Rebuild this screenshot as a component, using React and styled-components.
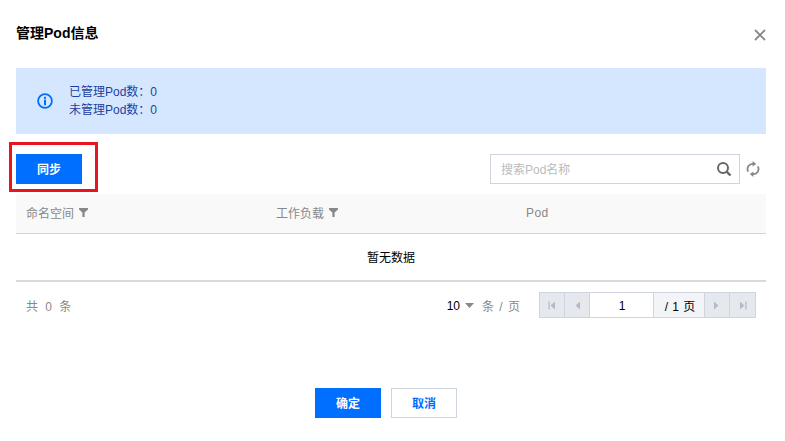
import React from 'react';
import styled, { createGlobalStyle } from 'styled-components';

const Global = createGlobalStyle`
  html, body { margin: 0; padding: 0; background: #fff; }
  body {
    font-family: "Liberation Sans", "Noto Sans CJK SC", sans-serif;
    font-size: 12px;
    color: #000;
  }
  * { box-sizing: border-box; }
`;

const Dialog = styled.div`
  position: relative;
  width: 785px;
  height: 441px;
  padding: 0 19px 0 16px;
  overflow: hidden;
`;

const Header = styled.div`
  display: flex;
  justify-content: space-between;
  align-items: flex-start;
  height: 68px;
  padding-top: 24px;
`;

const Title = styled.h3`
  margin: 0;
  font-size: 14px;
  line-height: 18px;
  font-weight: 700;
`;

const CloseButton = styled.button`
  border: 0;
  background: none;
  padding: 0;
  margin: 4px 0 0 0;
  width: 14px;
  height: 14px;
  transform: translateX(1px);
  color: #888;
  display: flex;
`;

const Alert = styled.div`
  display: flex;
  align-items: center;
  gap: 16px;
  height: 66px;
  padding-left: 21px;
  background: #d5e7ff;
  color: #1c3fa0;
  line-height: 18px;
`;

const AlertText = styled.div`
  display: flex;
  flex-direction: column;
`;

const Toolbar = styled.div`
  display: flex;
  justify-content: space-between;
  align-items: center;
  margin-top: 20px;
  height: 30px;
`;

const Button = styled.button`
  width: 66px;
  height: 30px;
  padding: 0 0 2px;
  border: 1px solid ${p => (p.$primary ? '#006eff' : '#cfd5de')};
  background: ${p => (p.$primary ? '#006eff' : '#fff')};
  color: ${p => (p.$primary ? '#fff' : '#006eff')};
  font: inherit;
  font-weight: 700;
`;

const SearchArea = styled.div`
  display: flex;
  align-items: center;
  gap: 6px;
  margin-right: 6px;
`;

const SearchBox = styled.div`
  display: flex;
  justify-content: space-between;
  align-items: center;
  width: 250px;
  height: 30px;
  padding: 0 7px 0 10px;
  border: 1px solid #cfd5de;
  color: #bbb;
`;

const Placeholder = styled.span`
  margin-bottom: 2px;
`;

const IconButton = styled.span`
  display: flex;
  width: 14px;
  height: 16px;
  color: #888;
  align-items: center;
  justify-content: center;
`;

const TableHead = styled.div`
  display: grid;
  grid-template-columns: 250px 250px 1fr;
  align-items: center;
  height: 40px;
  margin-top: 10px;
  padding: 0 0 2px 10px;
  background: #f9f9fa;
  border-bottom: 1px solid #cfd5de;
  color: #888;
`;

const HeadCell = styled.div`
  display: flex;
  align-items: center;
  gap: 5px;
  letter-spacing: ${p => (p.$latin ? '0.4px' : '0')};
`;

const EmptyRow = styled.div`
  display: flex;
  align-items: center;
  justify-content: center;
  height: 48px;
  padding-bottom: 2px;
  border-bottom: 2px solid #d5d9e0;
`;

const Pagination = styled.div`
  display: flex;
  justify-content: space-between;
  align-items: center;
  height: 26px;
  margin-top: 10px;
  padding: 0 10px;
  color: #888;
`;

const Total = styled.span`
  word-spacing: 4px;
`;

const PagerRight = styled.div`
  display: flex;
  align-items: center;
`;

const PageSize = styled.div`
  display: flex;
  align-items: center;
  gap: 5px;
  margin-right: 19px;
  color: #888;
`;

const SizeValue = styled.span`
  color: #000;
  padding-top: 1px;
`;

const Unit = styled.span`
  margin-left: 3px;
  word-spacing: 2px;
`;

const Pager = styled.div`
  display: flex;
  height: 26px;
  border: 1px solid #cfd5de;
`;

const PageArrow = styled.span`
  display: flex;
  align-items: center;
  justify-content: center;
  width: 25px;
  background: #e5e8ed;
  color: #b5bac2;
  border-right: ${p => (p.$last ? '0' : '1px solid #cfd5de')};
`;

const PageInput = styled.span`
  display: flex;
  align-items: center;
  justify-content: center;
  width: 64px;
  padding: 2px 0 0 1px;
  color: #000;
  background: #fff;
  border-right: 1px solid #cfd5de;
`;

const PageCount = styled.span`
  display: flex;
  align-items: center;
  justify-content: center;
  width: 51px;
  padding-left: 2px;
  word-spacing: 1px;
  color: #000;
  background: #f2f4f7;
  border-right: 1px solid #cfd5de;
`;

const Footer = styled.div`
  display: flex;
  justify-content: center;
  gap: 10px;
  margin-top: 70px;
  transform: translateX(-5px);
`;

const Highlight = styled.div`
  position: absolute;
  left: 9px;
  top: 142px;
  width: 89px;
  height: 50px;
  border: 3px solid #e8141f;
  pointer-events: none;
`;

const InfoIcon = () => (
  <svg width="16" height="16" viewBox="0 0 16 16" fill="none">
    <circle cx="8" cy="8" r="6.9" stroke="#006eff" strokeWidth="1.8" />
    <rect x="7" y="3.8" width="2" height="2" fill="#006eff" />
    <rect x="7" y="6.6" width="2" height="5.6" fill="#006eff" />
  </svg>
);

const CloseIcon = () => (
  <svg width="14" height="14" viewBox="0 0 14 14">
    <path d="M2 2 L12 12 M12 2 L2 12" stroke="currentColor" strokeWidth="1.8" fill="none" />
  </svg>
);

const SearchIcon = () => (
  <svg width="16" height="16" viewBox="0 0 16 16" fill="none">
    <circle cx="7" cy="7" r="5" stroke="#666" strokeWidth="2" />
    <path d="M10.5 10.5 L14.5 14.5" stroke="#666" strokeWidth="2.4" />
  </svg>
);

const RefreshIcon = () => (
  <svg width="14" height="16" viewBox="0 0 14 16" fill="none">
    <path d="M2.2 10.6 A5.2 5.2 0 0 1 7.6 2.9" stroke="currentColor" strokeWidth="1.8" />
    <path d="M11.8 5.4 A5.2 5.2 0 0 1 6.4 13.1" stroke="currentColor" strokeWidth="1.8" />
    <path d="M6.6 0 L10.2 3 L6.6 5.6 Z" fill="currentColor" />
    <path d="M7.4 16 L3.8 13 L7.4 10.4 Z" fill="currentColor" />
  </svg>
);

const FilterIcon = () => (
  <svg width="9" height="9" viewBox="0 0 9 9">
    <path d="M0 0 H9 V1.5 L5.6 4.6 V9 H3.4 V4.6 L0 1.5 Z" fill="#888" />
  </svg>
);

const Caret = () => (
  <svg width="9" height="5" viewBox="0 0 9 5">
    <path d="M0 0 H9 L4.5 5 Z" fill="#888" />
  </svg>
);

const PageIcon = ({ dir, edge }) => (
  <svg width="8" height="9" viewBox="0 0 8 9" style={{ transform: dir === 'right' ? 'scaleX(-1)' : undefined }}>
    {edge && <rect x="0.5" y="0.5" width="1.2" height="8" fill="currentColor" />}
    <path d="M7 0.5 V8.5 L2.6 4.5 Z" fill="currentColor" />
  </svg>
);

export default function App() {
  return (
    <>
      <Global />
      <Dialog>
        <Header>
          <Title>管理Pod信息</Title>
          <CloseButton><CloseIcon /></CloseButton>
        </Header>
        <Alert>
          <InfoIcon />
          <AlertText>
            <span>已管理Pod数：0</span>
            <span>未管理Pod数：0</span>
          </AlertText>
        </Alert>
        <Toolbar>
          <Button $primary>同步</Button>
          <SearchArea>
            <SearchBox>
              <Placeholder>搜索Pod名称</Placeholder>
              <SearchIcon />
            </SearchBox>
            <IconButton><RefreshIcon /></IconButton>
          </SearchArea>
        </Toolbar>
        <TableHead>
          <HeadCell>命名空间 <FilterIcon /></HeadCell>
          <HeadCell>工作负载 <FilterIcon /></HeadCell>
          <HeadCell $latin>Pod</HeadCell>
        </TableHead>
        <EmptyRow>暂无数据</EmptyRow>
        <Pagination>
          <Total>共 0 条</Total>
          <PagerRight>
            <PageSize>
              <SizeValue>10</SizeValue>
              <Caret />
              <Unit>条 / 页</Unit>
            </PageSize>
            <Pager>
              <PageArrow><PageIcon edge /></PageArrow>
              <PageArrow><PageIcon /></PageArrow>
              <PageInput>1</PageInput>
              <PageCount>/ 1 页</PageCount>
              <PageArrow><PageIcon dir="right" /></PageArrow>
              <PageArrow $last><PageIcon dir="right" edge /></PageArrow>
            </Pager>
          </PagerRight>
        </Pagination>
        <Footer>
          <Button $primary>确定</Button>
          <Button>取消</Button>
        </Footer>
        <Highlight />
      </Dialog>
    </>
  );
}
